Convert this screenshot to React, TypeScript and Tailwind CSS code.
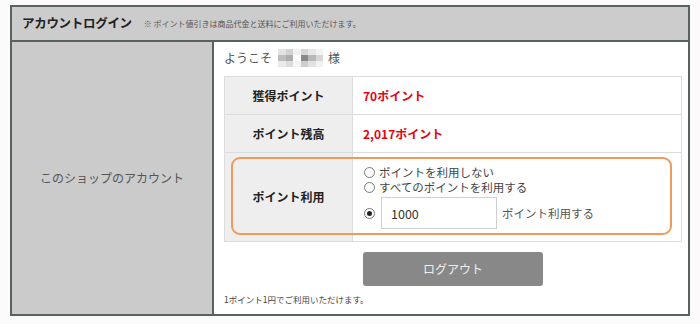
const font = "font-['Meiryo','Noto_Sans_CJK_JP',sans-serif]";

const mosaic = [
  ["#e3e3e3", "#d2d2d2", "#f0f0f0", "#d6d6d6", "#e6e6e6", "#f2f2f2"],
  ["#bdbdbd", "#adadad", "#ffffff", "#8a8a8a", "#b8b8b8", "#d6d6d6"],
  ["#eaeaea", "#dcdcdc", "#f4f4f4", "#cdcdcd", "#e2e2e2", "#f2f2f2"],
];

function Radio({ checked }: { checked?: boolean }) {
  return (
    <span className="relative inline-flex h-[11px] w-[11px] shrink-0 items-center justify-center rounded-full border border-[#7a7a7a] bg-white">
      {checked && <span className="h-[5px] w-[5px] rounded-full bg-[#222]" />}
    </span>
  );
}

export default function App() {
  return (
    <div className={`min-h-[324px] w-[700px] bg-[#fbfbfb] pt-[5px] pl-[10px] ${font}`}>
      <div className="w-[680px] border-2 border-[#56635f] bg-white">
        <div className="flex h-[35px] items-center gap-[12px] border-b-2 border-[#56635f] bg-[#cccccc] pl-[10px]">
          <span className="text-[12.5px] font-bold tracking-[-0.3px] text-[#222]">アカウントログイン</span>
          <span className="text-[8px] text-[#555]">※ ポイント値引きは商品代金と送料にご利用いただけます。</span>
        </div>

        <div className="flex">
          <div className="flex w-[202px] shrink-0 items-center justify-center border-r-2 border-[#56635f] bg-[#cbcbcb] text-[12px] text-[#555]">
            このショップのアカウント
          </div>

          <div className="flex-1 pt-[8px] pr-[6px] pl-[10px] pb-[9px]">
            <div className="flex h-[16px] items-center text-[12px] text-[#555]">
              <span>ようこそ</span>
              <span className="ml-[6px] mr-[5px] grid grid-cols-6">
                {mosaic.flat().map((c, i) => (
                  <span key={i} className="h-[6px] w-[7.5px]" style={{ background: c }} />
                ))}
              </span>
              <span>様</span>
            </div>

            <div className="relative mt-[10px] border border-[#dcdcdc]">
              <div className="flex h-[38px] border-b border-[#dcdcdc]">
                <div className="flex w-[128px] items-center justify-center border-r border-[#dcdcdc] bg-[#eeeeee] text-[12px] font-bold text-[#222]">
                  獲得ポイント
                </div>
                <div className="flex items-center pl-[10px] text-[12px] font-bold text-[#e60012]">70ポイント</div>
              </div>
              <div className="flex h-[38px] border-b border-[#dcdcdc]">
                <div className="flex w-[128px] items-center justify-center border-r border-[#dcdcdc] bg-[#eeeeee] text-[12px] font-bold text-[#222]">
                  ポイント残高
                </div>
                <div className="flex items-center pl-[10px] text-[12px] font-bold text-[#e60012]">2,017ポイント</div>
              </div>
              <div className="flex h-[88px]">
                <div className="flex w-[128px] items-center justify-center border-r border-[#dcdcdc] bg-[#eeeeee] text-[12px] font-bold text-[#222]">
                  ポイント利用
                </div>
                <div className="flex flex-col pt-[12px] pl-[11px] text-[11.5px] leading-[15px] text-[#444]">
                  <label className="flex h-[15px] items-center gap-[4px]">
                    <Radio />
                    <span>ポイントを利用しない</span>
                  </label>
                  <label className="flex h-[15px] items-center gap-[4px]">
                    <Radio />
                    <span>すべてのポイントを利用する</span>
                  </label>
                  <div className="mt-[2px] flex items-center">
                    <Radio checked />
                    <div className="ml-[6px] flex h-[32px] w-[116px] items-center border border-[#cfcfcf] bg-white pl-[9px] text-[12.5px] text-[#333]">
                      1000
                    </div>
                    <span className="ml-[5px] text-[#555]">ポイント利用する</span>
                  </div>
                </div>
              </div>

              <div className="pointer-events-none absolute top-[80px] left-[6px] h-[78px] w-[441px] rounded-[9px] border-2 border-[#ee9a5a]" />
            </div>

            <div className="mt-[10px] flex justify-center">
              <button className="h-[34px] w-[180px] rounded-[3px] bg-[#888888] text-[12px] text-[#eeeeee]">
                ログアウト
              </button>
            </div>

            <p className="mt-[7px] text-[8.5px] leading-[12px] text-[#444]">1ポイント1円でご利用いただけます。</p>
          </div>
        </div>
      </div>
    </div>
  );
}
